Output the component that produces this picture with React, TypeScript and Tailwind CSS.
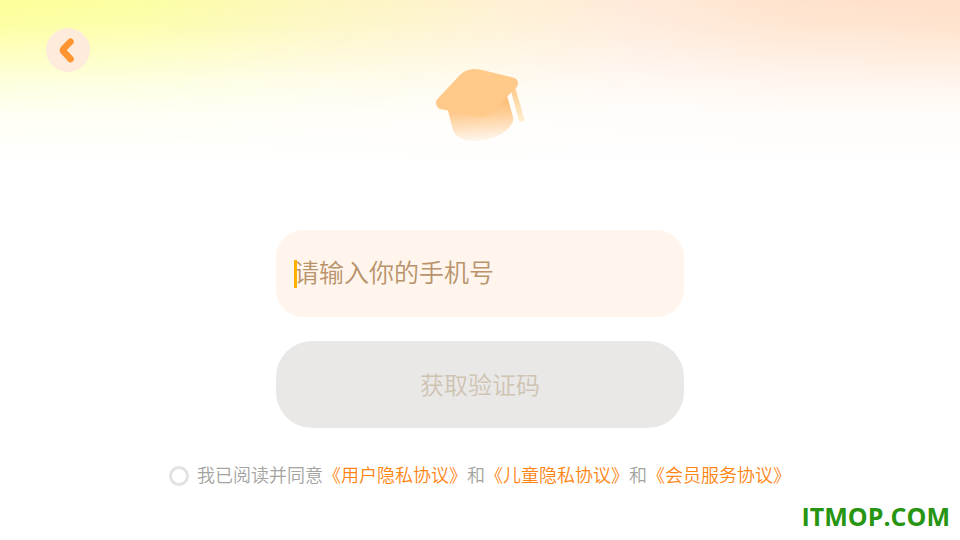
import { useState } from "react";

const agreements = ["用户隐私协议", "儿童隐私协议", "会员服务协议"];

function BackIcon() {
  return (
    <svg viewBox="0 0 44 44" className="size-11" fill="none" aria-hidden="true">
      <path
        d="M24.5 13.8 17.6 20.8Q16.4 22.2 17.6 23.6L24.5 31"
        stroke="#ff9430"
        strokeWidth="6.6"
        strokeLinecap="round"
        strokeLinejoin="round"
      />
    </svg>
  );
}

function GraduationCap() {
  return (
    <svg viewBox="30 24 270 222" className="mt-10 h-[74px] w-[90px]" aria-hidden="true">
      <defs>
        <linearGradient id="cap" x1="0.55" y1="0.2" x2="0.62" y2="1">
          <stop offset="0" stopColor="#fec17b" />
          <stop offset="0.3" stopColor="#fecf98" />
          <stop offset="1" stopColor="#fff8f1" />
        </linearGradient>
        <linearGradient id="tassel" x1="0" y1="0" x2="0" y2="1">
          <stop offset="0" stopColor="#ffc98a" />
          <stop offset="1" stopColor="#fff1d2" />
        </linearGradient>
      </defs>
      {/* Base */}
      <path
        d="M67 145 83 206Q91 239 142 243C190 246 248 222 263 186Q266 177 263 166L247 104 160 130Z"
        fill="url(#cap)"
      />
      {/* Tassel */}
      <path
        d="M257 92 270 80 298 177Q299 184 291 186 284 187 281 180Z"
        fill="url(#tassel)"
      />
      {/* Gap between base and tassel */}
      <path d="M246 105 257 93 281 180 263 166Z" fill="#fffdfa" />
      {/* Board */}
      <path
        d="M42 146Q29 137 34 122L38 116 102 48C122 27 145 24 171 30L267 53Q283 60 278 76L273 83 206 151C189 170 176 173 151 169Z"
        fill="#ffc98a"
      />
    </svg>
  );
}

export default function App() {
  const [phone, setPhone] = useState("");
  const [agreed, setAgreed] = useState(false);

  return (
    <main className="flex min-h-screen flex-col bg-white bg-[linear-gradient(to_bottom,#ffffff00_0px,#ffffff20_25px,#ffffff5c_50px,#ffffffac_82px,#ffffffe4_115px,#ffffff_165px),linear-gradient(to_right,#fdff98_0%,#fcffa2_14%,#fdf7be_32%,#fff1d3_52%,#ffeada_66%,#ffe3cd_82%,#ffe0c8_100%)] font-['Noto_Sans_CJK_SC',sans-serif] font-[350]">
      <header className="grid grid-cols-[1fr_auto_1fr] items-start px-[46px] pt-7">
        <button
          type="button"
          aria-label="返回"
          className="size-11 rounded-full bg-[#feebdc]"
        >
          <BackIcon />
        </button>
        <GraduationCap />
      </header>

      <form
        className="mt-22 flex flex-col items-center px-4"
        onSubmit={(e) => e.preventDefault()}
      >
        <div className="flex w-full max-w-[408px] flex-col gap-6">
          <div className="relative flex items-center">
            <input
              type="tel"
              aria-label="手机号"
              placeholder="请输入你的手机号"
              value={phone}
              onChange={(e) => setPhone(e.target.value)}
              className="h-[87px] w-full rounded-[27px] bg-[#fff5ec] px-[18px] pb-1.5 text-[25px] text-[#b8936b] caret-[#ffb000] outline-none placeholder:text-[#b8936b]"
            />
            {/* Caret */}
            {!phone && <span className="absolute left-[18px] h-7 w-[3px] bg-[#ffb000]" />}
          </div>
          <button
            type="submit"
            className="h-[87px] rounded-[36px] bg-[#e9e8e6] pb-0.5 text-2xl text-[#cfc3b3]"
          >
            获取验证码
          </button>
        </div>

        <div className="mt-[34px] flex items-center gap-2 text-lg leading-6 text-[#a3a3a0]">
          <input
            id="agree"
            type="checkbox"
            checked={agreed}
            onChange={(e) => setAgreed(e.target.checked)}
            className="size-5 shrink-0 appearance-none rounded-full border-3 border-[#e2e2e2] bg-white checked:bg-[#ff8412]"
          />
          <p className="pb-1">
            <label htmlFor="agree">我已阅读并同意</label>
            {agreements.map((name, i) => (
              <span key={name}>
                {i > 0 && "和"}
                <a href="#" className="text-[#ff8412]">
                  《{name}》
                </a>
              </span>
            ))}
          </p>
        </div>
      </form>

      <footer className="mt-auto px-2.5 pb-1.5 text-right font-['Open_Sans',sans-serif] text-[25px] leading-9 font-bold text-[#279412]">
        ITMOP.COM
      </footer>
    </main>
  );
}
